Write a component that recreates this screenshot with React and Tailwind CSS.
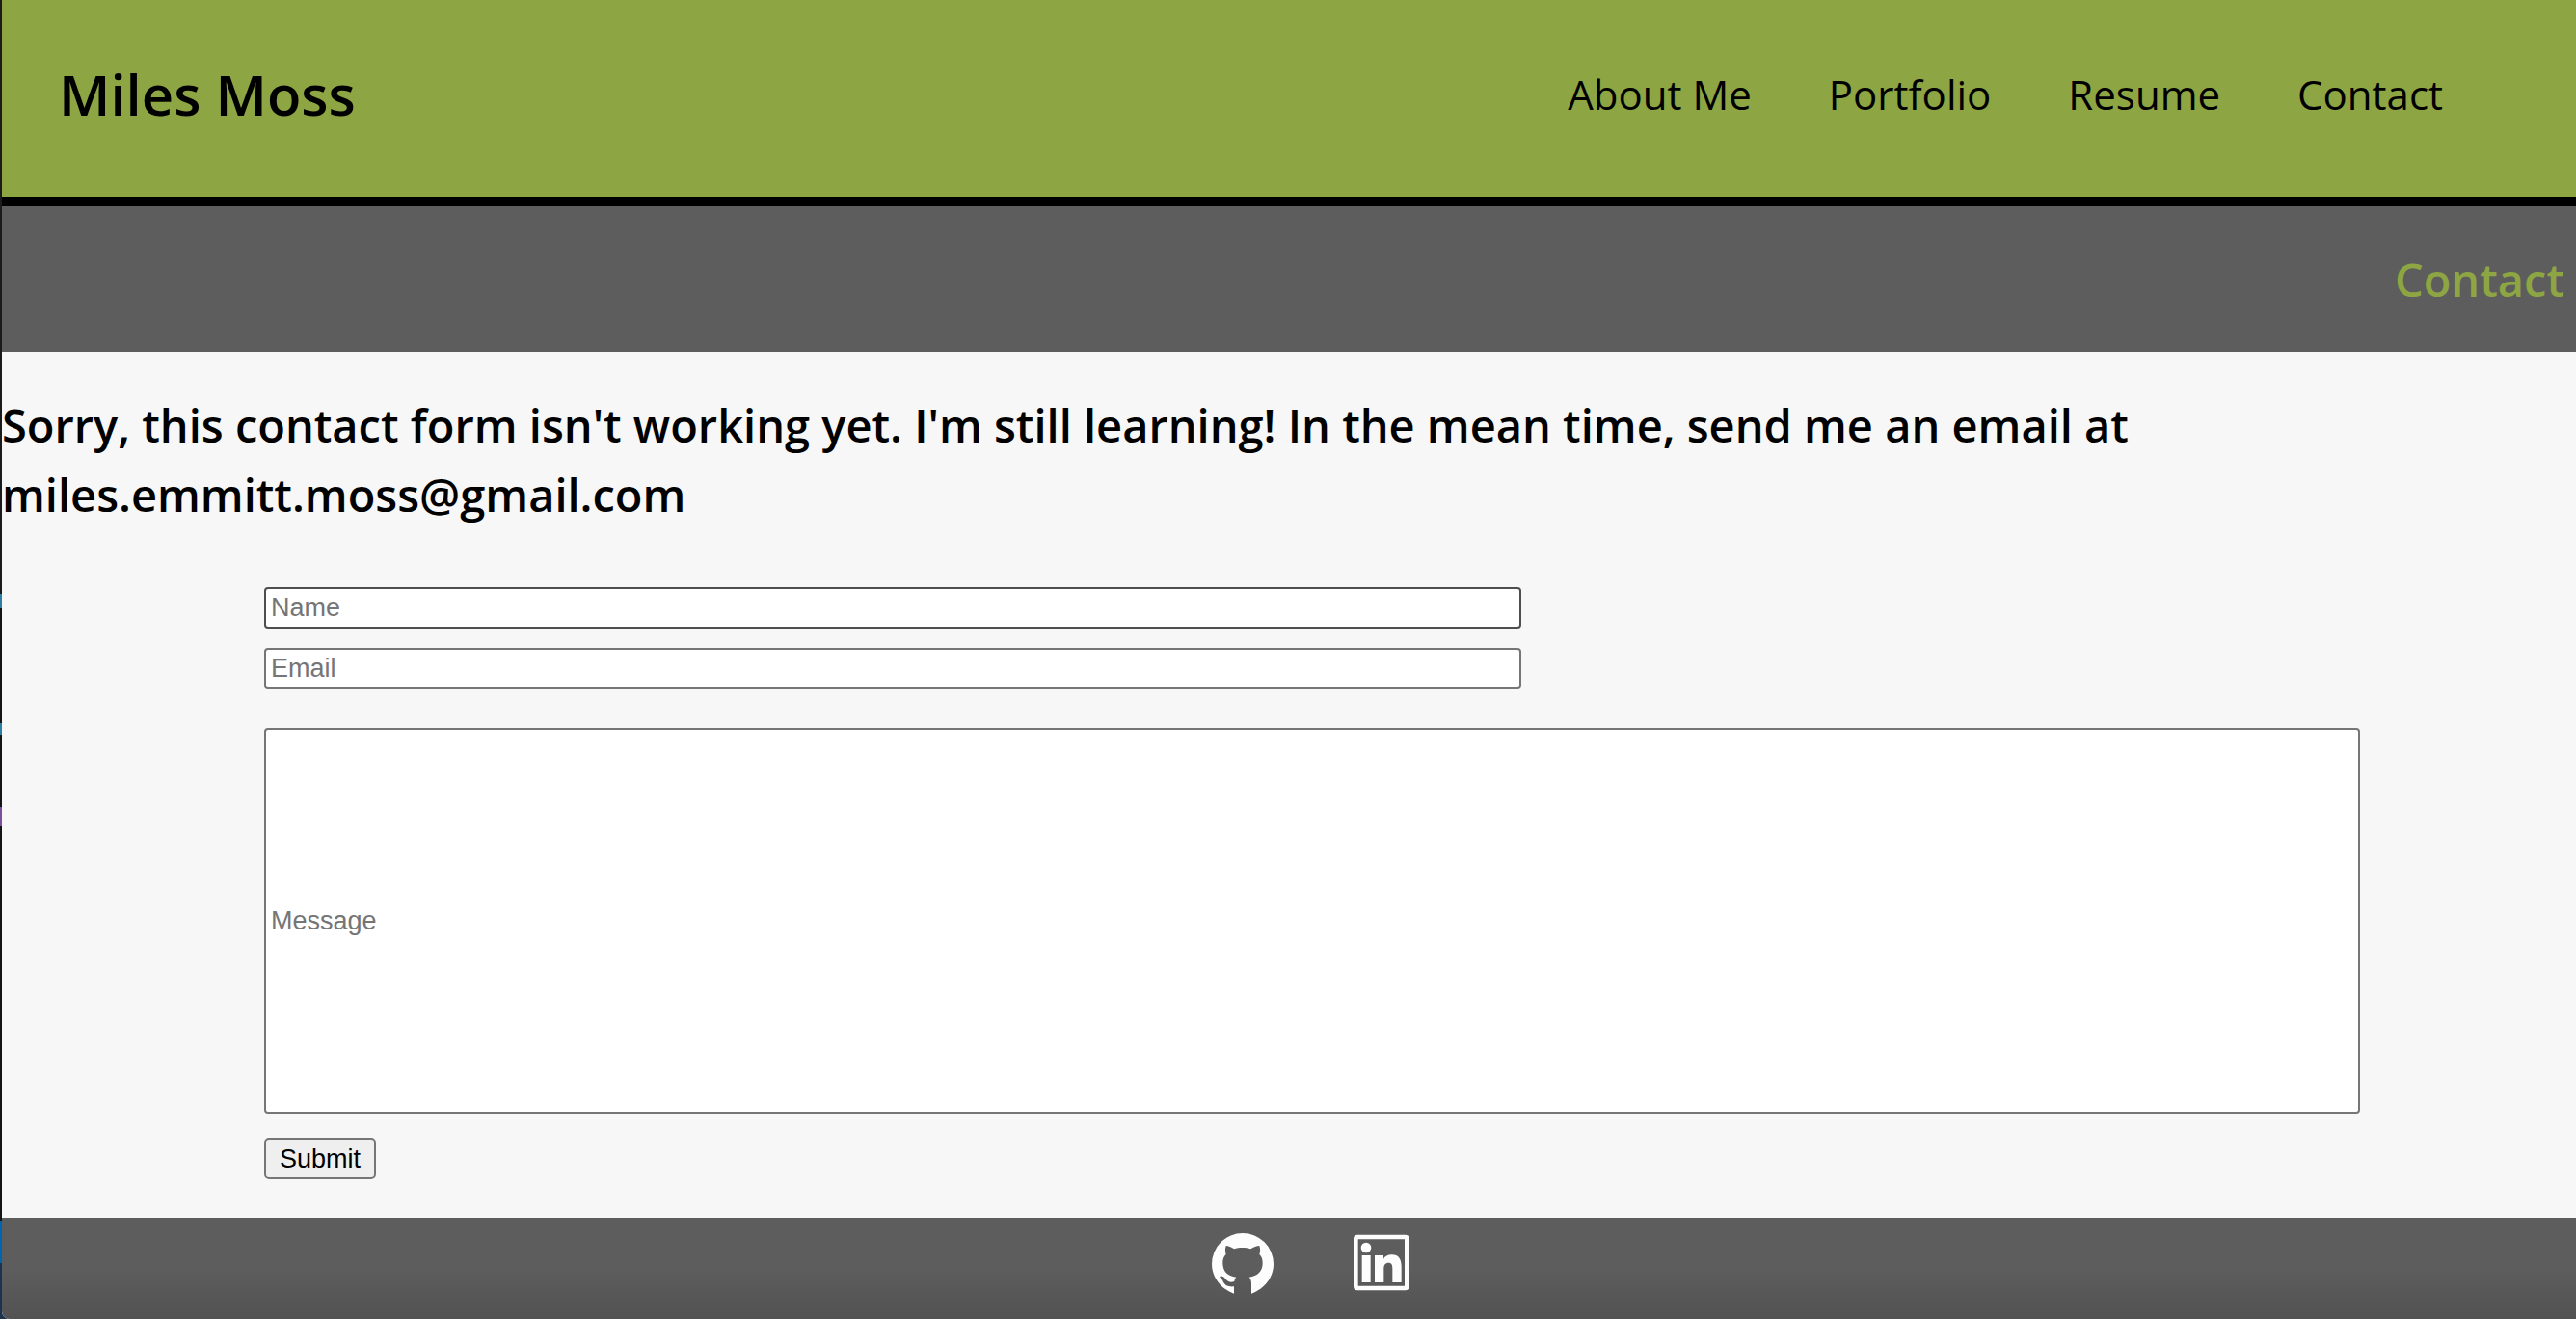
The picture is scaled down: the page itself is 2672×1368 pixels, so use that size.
const links = ["About Me", "Portfolio", "Resume", "Contact"];

function GithubIcon() {
  return (
    <svg viewBox="21 15 192 192" className="size-16" fill="#fdfdfd" aria-hidden="true">
      <path d="M117 15A96 96 0 0 0 21 111C21 151 48 188 90 203L90 181C70 183 62 176 58 169C54 161 52 157 47 154C44 150 47 147 53 149C61 151 64 159 69 163C75 168 84 168 91 165C92 158 94 155 97 152C70 148 55 134 55 108C55 96 58 88 65 81C62 72 62 63 65 54C72 54 82 58 90 64C105 59 127 59 142 64C150 58 161 54 169 54C172 63 172 72 169 81C176 88 179 96 179 108C179 134 164 148 137 152C142 156 144 163 144 171L144 203C186 188 213 151 213 111A96 96 0 0 0 117 15Z" />
    </svg>
  );
}

function LinkedinIcon() {
  return (
    <svg viewBox="15 15 192 192" className="size-16" fill="#fdfdfd" aria-hidden="true">
      <rect x="31" y="27" width="159" height="159" rx="5" fill="none" stroke="#fdfdfd" strokeWidth="14" />
      <circle cx="63" cy="60" r="16" />
      <path d="M50 84h27v84h-27zM90 84h27v11c5-8 13-13 26-13 21 0 30 13 30 38v48h-28v-43c0-12-3-18-12-18-11 0-15 8-15 18v43h-28z" />
    </svg>
  );
}

const field =
  "h-[43px] w-3/5 rounded-[4px] border-2 bg-white px-[5px] font-['Liberation_Sans',Arial,sans-serif] text-[27px] leading-8 placeholder:text-[#757575]";

export default function App() {
  return (
    <div className="flex min-h-screen bg-[#1c3350] font-['Trebuchet_MS','Open_Sans',sans-serif] text-black">
      <div
        aria-hidden="true"
        className="w-[2px] shrink-0 bg-[linear-gradient(#1b1b1b_0_616px,#2c7ea3_616px_631px,#141414_631px_750px,#2c7ea3_750px_762px,#141414_762px_837px,#7c4f9c_837px_857px,#141414_857px_1266px,#0064ae_1266px_1310px,#1c3350_1310px)]"
      />
      <div className="flex min-w-0 flex-1 flex-col overflow-hidden rounded-bl-lg bg-[#f7f7f7]">
        <header className="flex h-[214px] items-center justify-between border-b-[10px] border-black bg-[#8ea543] pr-[138px] pb-2 pl-[59px]">
          <h1 className="text-[58px] leading-[80px] font-semibold">Miles Moss</h1>
          <nav className="flex gap-20">
            {links.map((name) => (
              <a key={name} href="#contact" className="text-[42px] leading-[60px]">
                {name}
              </a>
            ))}
          </nav>
        </header>

        <div className="flex h-[151px] items-center justify-end bg-[#5d5d5d] px-3">
          <h2 id="contact" className="text-[47px] leading-[72px] font-semibold text-[#8ea543]">Contact</h2>
        </div>

        <main className="flex-1 pt-10 pb-10">
          <h2 className="text-[47px] leading-[72px] font-semibold">
            Sorry, this contact form isn't working yet. I'm still learning! In the mean time, send me an email at
            <br />
            miles.emmitt.moss@gmail.com
          </h2>
          <form className="mt-[60px] mr-[224px] ml-[272px] flex flex-col items-start" onSubmit={(e) => e.preventDefault()}>
            <input type="text" aria-label="Name" placeholder="Name" className={`${field} border-[#4f4d4e]`} />
            <input type="email" aria-label="Email" placeholder="Email" className={`${field} mt-5 border-[#767676]`} />
            <input
              type="text"
              aria-label="Message"
              placeholder="Message"
              className="mt-10 h-[400px] w-full rounded-[4px] border-2 border-[#767676] bg-white px-[5px] font-['Liberation_Sans',Arial,sans-serif] text-[27px] leading-8 placeholder:text-[#757575]"
            />
            <button
              type="submit"
              className="mt-[25px] h-[43px] rounded-[5px] border-2 border-[#767676] bg-[#efefef] px-[14px] font-['Liberation_Sans',Arial,sans-serif] text-[27px] leading-8"
            >
              Submit
            </button>
          </form>
        </main>

        <footer className="flex h-[105px] justify-center gap-20 bg-linear-to-b from-[#5d5d5d] from-50% to-[#535253] pt-4 pl-12">
          <a href="#github" aria-label="GitHub" className="size-16">
            <GithubIcon />
          </a>
          <a href="#linkedin" aria-label="LinkedIn" className="size-16">
            <LinkedinIcon />
          </a>
        </footer>
      </div>
    </div>
  );
}
